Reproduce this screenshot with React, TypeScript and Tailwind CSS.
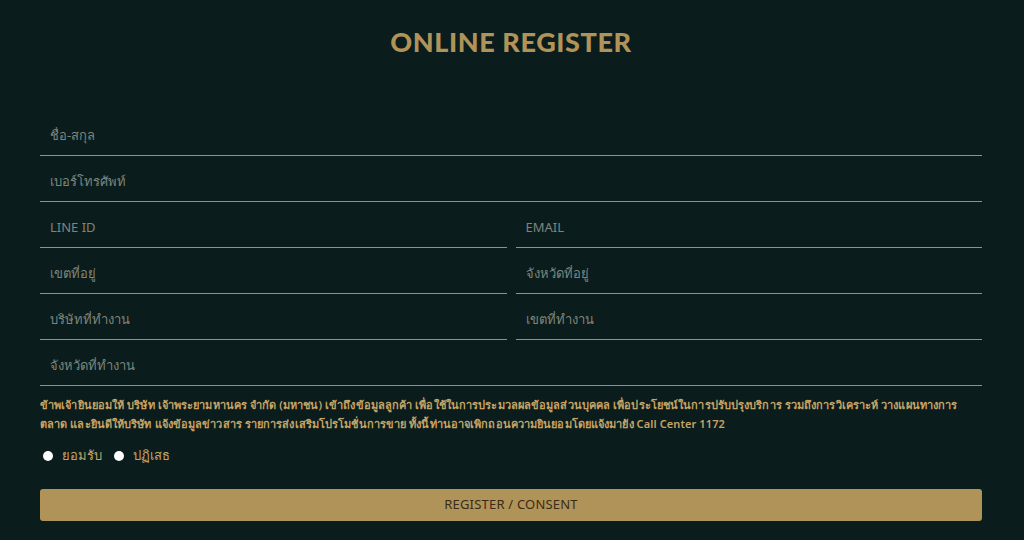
import React from "react";

const fields: string[][] = [
  ["ชื่อ-สกุล"],
  ["เบอร์โทรศัพท์"],
  ["LINE ID", "EMAIL"],
  ["เขตที่อยู่", "จังหวัดที่อยู่"],
  ["บริษัทที่ทำงาน", "เขตที่ทำงาน"],
  ["จังหวัดที่ทำงาน"],
];

const Field = ({ placeholder }: { placeholder: string }) => (
  <div className="flex-1 h-[46px] flex items-end border-b border-[#8e957c] pb-[11px] pl-[10px]">
    <input
      placeholder={placeholder}
      className="w-full bg-transparent outline-none text-[13px] leading-[18px] text-[#c9cfc4] placeholder:text-[#7b867c]"
    />
  </div>
);

export default function App() {
  return (
    <div
      className="w-[1024px] h-[540px] bg-[#0b1c1c] overflow-hidden pl-[40px] pr-[42px] pt-[27px]"
      style={{ fontFamily: '"Noto Sans", "Open Sans", sans-serif' }}
    >
      <h1 className="text-center text-[27px] leading-[30px] font-black tracking-[0.6px] text-[#b09359] font-['Lato',sans-serif]">
        ONLINE REGISTER
      </h1>

      {/* form rows */}
      <div className="mt-[53px] flex flex-col">
        {fields.map((row, i) => (
          <div key={i} className="flex gap-[9px]">
            {row.map((p) => (
              <Field key={p} placeholder={p} />
            ))}
          </div>
        ))}
      </div>

      {/* consent */}
      <p className="mt-[9px] text-[11px] leading-[19px] font-semibold tracking-[0.1px] text-[#c6a466]">
        ข้าพเจ้ายินยอมให้ บริษัท เจ้าพระยามหานคร จำกัด (มหาชน) เข้าถึงข้อมูลลูกค้า เพื่อใช้ในการประมวลผลข้อมูลส่วนบุคคล เพื่อประโยชน์ในการปรับปรุงบริการ รวมถึงการวิเคราะห์ วางแผนทางการ
        <br />
        ตลาด และยินดีให้บริษัท แจ้งข้อมูลข่าวสาร รายการส่งเสริมโปรโมชั่นการขาย ทั้งนี้ท่านอาจเพิกถอนความยินยอมโดยแจ้งมายัง Call Center 1172
      </p>

      <div className="mt-[13px] flex items-center gap-[12px] text-[13px] text-[#c6a466]">
        <label className="flex items-center gap-[9px] pl-[3px]">
          <span className="w-[10px] h-[10px] rounded-full bg-white" />
          ยอมรับ
        </label>
        <label className="flex items-center gap-[9px]">
          <span className="w-[10px] h-[10px] rounded-full bg-white" />
          ปฏิเสธ
        </label>
      </div>

      <button className="mt-[23px] w-full h-[32px] rounded-[3px] bg-[#b09359] text-[13px] text-[#3a2c16] tracking-[0.2px]">
        REGISTER / CONSENT
      </button>
    </div>
  );
}
